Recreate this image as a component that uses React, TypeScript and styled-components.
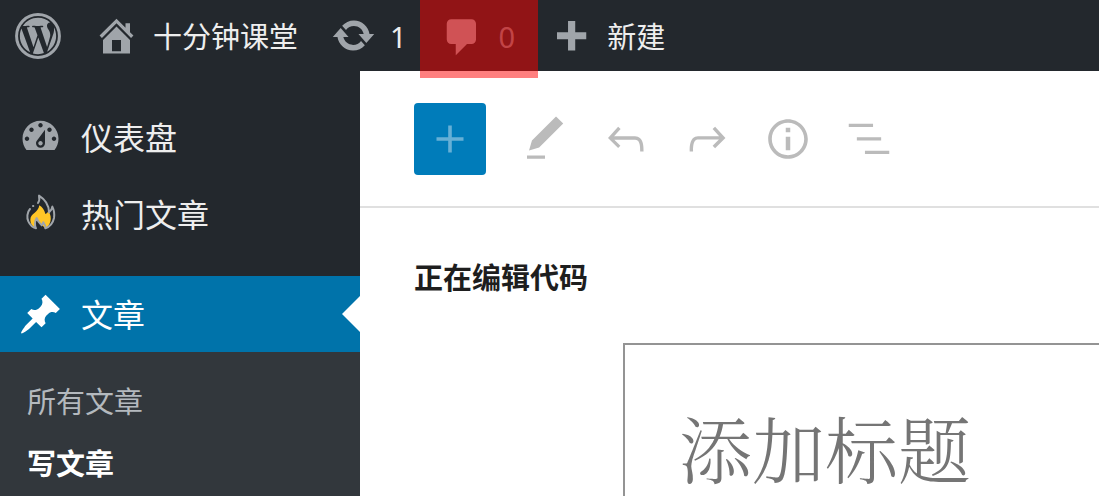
import React from 'react';
import styled, { createGlobalStyle, css } from 'styled-components';

const sans = `"Noto Sans", "Noto Sans CJK SC", sans-serif`;
const serif = `"Noto Serif CJK SC", "Source Han Serif SC", SimSun, "Noto Sans CJK SC", serif`;

const GlobalStyle = createGlobalStyle`
  *, *::before, *::after { box-sizing: border-box; }
  html { overflow: hidden; }
  body { margin: 0; font-family: ${sans}; background: #fff; }
  h1, ul { margin: 0; padding: 0; }
  ul { list-style: none; }
  a { color: inherit; text-decoration: none; }
  button { border: 0; padding: 0; font: inherit; cursor: pointer; }
`;

const Page = styled.div`
  display: flex;
  flex-direction: column;
  height: 100vh;
  overflow: hidden;
`;

const AdminBar = styled.nav`
  display: flex;
  flex: none;
  height: 71px;
  background: #23282d;
  color: #eee;
  font-size: 29px;
`;

const BarItem = styled.a<{ $dim?: boolean }>`
  position: relative;
  display: flex;
  align-items: center;
  gap: 14px;
  padding: 0 16px 0 17px;
  white-space: nowrap;
  ${p => p.$dim && css`color: #84888c;`}
`;

const LogoItem = styled(BarItem)`
  padding: 0 16px 0 15px;
`;

const Label = styled.span`
  line-height: 44px;
  padding-top: 2px;
`;

const Highlight = styled.span`
  position: absolute;
  z-index: 2;
  top: 0;
  bottom: -7px;
  left: -3px;
  right: -7px;
  background: rgba(255, 0, 0, 0.5);
`;

const Dashicon = styled.svg`
  flex: none;
  width: 45px;
  height: 45px;
  fill: #a0a5aa;
`;

const LogoIcon = styled(Dashicon)`
  width: 46px;
  height: 46px;
`;

const Body = styled.div`
  display: flex;
  flex: 1;
  min-height: 0;
`;

const Sidebar = styled.nav`
  flex: none;
  width: 360px;
  padding-top: 27px;
  background: #23282d;
  color: #eee;
`;

const MenuLink = styled.a<{ $current?: boolean }>`
  position: relative;
  display: flex;
  align-items: center;
  gap: 18px;
  height: 77px;
  padding-left: 18px;
  font-size: 32px;
  ${p => p.$current && css`
    height: 76px;
    margin-top: 24px;
    background: #0073aa;
    color: #fff;
    ${Dashicon} { fill: #fff; }
    &::after {
      content: '';
      position: absolute;
      right: 0;
      top: 20px;
      border: 18px solid transparent;
      border-left: 0;
      border-right-color: #fff;
    }
  `}
`;

const SubMenu = styled.ul`
  padding: 19px 0;
  background: #32373c;
  min-height: 100%;
`;

const SubLink = styled.a<{ $current?: boolean }>`
  display: block;
  padding-left: 27px;
  font-size: 29px;
  line-height: 62px;
  color: ${p => (p.$current ? '#fff' : '#b4b9be')};
  font-weight: ${p => (p.$current ? 700 : 400)};
`;

const Editor = styled.main`
  flex: 1;
  min-width: 0;
  overflow: hidden;
  background: #fff;
`;

const Toolbar = styled.div`
  display: flex;
  align-items: center;
  gap: 9px;
  height: 137px;
  padding-left: 54px;
  border-bottom: 2px solid #e0e0e0;
`;

const ToolButton = styled.button`
  display: flex;
  align-items: center;
  justify-content: center;
  flex: none;
  width: 72px;
  height: 72px;
  background: none;
  color: #bbb;
`;

const InsertButton = styled(ToolButton)`
  margin-right: 14px;
  border-radius: 4px;
  background: #007cba;
  color: #66b0d6;
`;

const ToolIcon = styled.svg`
  width: 54px;
  height: 54px;
  fill: currentColor;
`;

const Heading = styled.h1`
  padding: 48px 54px 0;
  font-size: 29px;
  line-height: 44px;
  font-weight: 700;
  color: #1e1e1e;
`;

const TitleInput = styled.input`
  display: block;
  width: 100%;
  height: 206px;
  margin: 43px 0 0 263px;
  padding: 0 54px;
  border: 2px solid #949494;
  border-radius: 0;
  outline: 0;
  background: #fff;
  color: #1e1e1e;
  font-family: ${serif};
  font-size: 73px;
  font-weight: 300;
  &::placeholder { color: #757575; opacity: 1; }
`;

const dash = {
  home: 'M16 8.5l1.53 1.53-1.06 1.06L10 4.6l-6.47 6.49-1.06-1.06L10 2.5l4 4v-2h2v4zm-6-2.46l6 5.99V18H4v-5.97zM12 17v-5H8v5h4z',
  update: 'M10.2 3.28c3.53 0 6.43 2.61 6.92 6h2.08l-3.5 4-3.5-4h2.32c-.45-1.97-2.21-3.45-4.32-3.45-1.45 0-2.73.71-3.54 1.78L4.95 5.66C6.23 4.2 8.11 3.28 10.2 3.28zm-.4 13.44c-3.52 0-6.43-2.61-6.92-6H.8l3.5-4c1.17 1.33 2.33 2.67 3.5 4H5.48c.45 1.97 2.21 3.45 4.32 3.45 1.45 0 2.73-.71 3.54-1.78l1.71 1.95c-1.28 1.46-3.15 2.38-5.25 2.38z',
  comment: 'M5 2.8h9c1.1 0 2 .9 2 2v7c0 1.1-.9 2-2 2h-2l-5 5v-5H5c-1.1 0-2-.9-2-2v-7c0-1.1.9-2 2-2z',
  plus: 'M17 8.5v3.2h-4.9v5H8.9v-5H4V8.5h4.9v-5h3.2v5z',
  dashboard: 'M3.76 16h12.48c1.1-1.37 1.76-3.11 1.76-5 0-4.42-3.58-8-8-8s-8 3.58-8 8c0 1.89.66 3.63 1.76 5zM10 4c.55 0 1 .45 1 1s-.45 1-1 1-1-.45-1-1 .45-1 1-1zM6 6c.55 0 1 .45 1 1s-.45 1-1 1-1-.45-1-1 .45-1 1-1zm8 0c.55 0 1 .45 1 1s-.45 1-1 1-1-.45-1-1 .45-1 1-1zm-5.37 5.55L12 7v6c0 1.1-.9 2-2 2s-2-.9-2-2c0-.57.24-1.08.63-1.45zM4 10c.55 0 1 .45 1 1s-.45 1-1 1-1-.45-1-1 .45-1 1-1zm12 0c.55 0 1 .45 1 1s-.45 1-1 1-1-.45-1-1 .45-1 1-1zm-5 3c0-.55-.45-1-1-1s-1 .45-1 1 .45 1 1 1 1-.45 1-1z',
  pin: 'M10.44 3.02l1.82-1.82 6.36 6.35-1.83 1.82c-1.05-.68-2.48-.57-3.41.36l-.75.75c-.92.93-1.04 2.35-.35 3.41l-1.83 1.82-2.41-2.41-2.8 2.79c-.42.42-3.38 2.71-3.8 2.29s1.86-3.39 2.28-3.81l2.79-2.79L4.1 9.36l1.83-1.82c1.05.69 2.48.57 3.4-.36l.75-.75c.93-.92 1.05-2.35.36-3.41z',
};

const tools = [
  { label: '工具', d: 'M20.1 5.1L16.9 2 6.2 12.7l-1.3 4.4 4.5-1.3L20.1 5.1zM4 20.8h8v-1.5H4v1.5z' },
  { label: '撤销', d: 'M18.3 11.7c-.6-.6-1.4-.9-2.3-.9H6.7l2.9-3.3-1.1-1-4.5 5L8.5 16l1-1-2.7-2.7H16c.5 0 .9.2 1.3.5 1 1 1 3.4 1 4.5v.3h1.5v-.2c0-1.5 0-4.3-1.5-5.7z' },
  { label: '重做', d: 'M15.6 6.5l-1.1 1 2.9 3.3H8c-.9 0-1.7.3-2.3.9-1.4 1.5-1.4 4.2-1.4 5.6v.2h1.5v-.3c0-1.1 0-3.5 1-4.5.3-.3.7-.5 1.3-.5h9.2L14.5 15l1.1 1.1 4.6-4.6-4.6-5z' },
  { label: '详情', d: 'M12 3.2c-4.8 0-8.8 3.9-8.8 8.8 0 4.8 3.9 8.8 8.8 8.8 4.8 0 8.8-3.9 8.8-8.8 0-4.8-4-8.8-8.8-8.8zm0 16c-4 0-7.2-3.3-7.2-7.2C4.8 8 8 4.8 12 4.8s7.2 3.3 7.2 7.2c0 4-3.2 7.2-7.2 7.2zM11 17h2v-6h-2v6zm0-8h2V7h-2v2z' },
  { label: '大纲', d: 'M13.8 5.2H3v1.5h10.8V5.2zm-3.6 12v1.5H21v-1.5H10.2zm7.2-6H6.6v1.5h10.8v-1.5z' },
];

const Icon = ({ d }: { d: string }) => (
  <Dashicon viewBox="0 0 20 20" aria-hidden="true"><path fillRule="evenodd" d={d} /></Dashicon>
);

const WordPressLogo = () => (
  <LogoIcon viewBox="8 8 496 496" aria-hidden="true">
    <circle cx="256" cy="256" r="231" fill="none" stroke="#a0a5aa" strokeWidth="32" />
    <g transform="translate(256 256) scale(.92) translate(-256 -256)">
      <path d="M61.7 169.4l101.5 278C92.2 413 43.3 340.2 43.3 256c0-30.9 6.6-60.1 18.4-86.6zm337.9 75.9c0-26.3-9.4-44.5-17.5-58.7-10.8-17.5-20.9-32.4-20.9-49.9 0-19.6 14.8-37.8 35.7-37.8.9 0 1.8.1 2.8.2-37.9-34.7-88.3-55.9-143.7-55.9-74.3 0-139.7 38.1-177.8 95.9 5 .2 9.7.3 13.7.3 22.2 0 56.7-2.7 56.7-2.7 11.5-.7 12.8 16.2 1.4 17.5 0 0-11.5 1.3-24.3 2l77.5 230.4L249.8 247l-33.1-90.8c-11.5-.7-22.3-2-22.3-2-11.5-.7-10.1-18.2 1.3-17.5 0 0 35.1 2.7 56 2.7 22.2 0 56.7-2.7 56.7-2.7 11.5-.7 12.8 16.2 1.4 17.5 0 0-11.5 1.3-24.3 2l76.9 228.7 21.2-70.9c9-29.4 16-50.5 16-68.7zm-139.9 29.3l-63.8 185.5c19.1 5.6 39.2 8.7 60.1 8.7 24.8 0 48.5-4.3 70.6-12.1-.6-.9-1.1-1.9-1.5-2.9l-65.4-179.2zm183-120.7c.9 6.8 1.4 14 1.4 21.9 0 21.6-4 45.8-16.2 76.2l-65 187.9C426.2 403 468.7 334.5 468.7 256c0-37-9.4-71.8-26-102.1z" />
    </g>
  </LogoIcon>
);

const FlameIcon = () => (
  <Dashicon viewBox="0 0 135 135" aria-hidden="true">
    <path fill="#ffc627" d="M64 43c9 5 15 14 18 26 4-1 7-4 9-9 7 10 9 22 6 32-3 10-8 16-16 20-3-4-6-8-10-11-6-5-11-10-15-17-5 7-6 15-5 26-9-5-14-14-14-24 0-19 24-20 27-43z" />
    <g fill="none" stroke="#a0a5aa" strokeWidth="6" strokeLinecap="round" strokeLinejoin="round">
      <path d="M36 54C27 64 26 80 31 91c5 11 12 18 23 21-5-11-4-21 2-31 3 10 8 16 15 22 3-3 4-5 5-9 5 6 7 11 6 18 13-5 23-16 26-31 2-13 0-24-5-34-1 8-4 13-10 17 0-24-11-38-30-50 2 8 1 16-3 22" />
      <path d="M45 45h1" />
    </g>
  </Dashicon>
);

export default function App() {
  return (
    <Page>
      <GlobalStyle />
      <AdminBar>
        <LogoItem href="#" aria-label="WordPress"><WordPressLogo /></LogoItem>
        <BarItem href="#"><Icon d={dash.home} /><Label>十分钟课堂</Label></BarItem>
        <BarItem href="#"><Icon d={dash.update} /><Label>1</Label></BarItem>
        <BarItem href="#" $dim><Icon d={dash.comment} /><Label>0</Label><Highlight /></BarItem>
        <BarItem href="#"><Icon d={dash.plus} /><Label>新建</Label></BarItem>
      </AdminBar>
      <Body>
        <Sidebar>
          <MenuLink href="#"><Icon d={dash.dashboard} /><Label>仪表盘</Label></MenuLink>
          <MenuLink href="#"><FlameIcon /><Label>热门文章</Label></MenuLink>
          <MenuLink href="#" $current><Icon d={dash.pin} /><Label>文章</Label></MenuLink>
          <SubMenu>
            <li><SubLink href="#">所有文章</SubLink></li>
            <li><SubLink href="#" $current>写文章</SubLink></li>
          </SubMenu>
        </Sidebar>
        <Editor>
          <Toolbar>
            <InsertButton type="button" aria-label="添加区块">
              <ToolIcon viewBox="0 0 24 24"><path d="M18 11.2h-5.2V6h-1.6v5.2H6v1.6h5.2V18h1.6v-5.2H18z" /></ToolIcon>
            </InsertButton>
            {tools.map(t => (
              <ToolButton key={t.label} type="button" aria-label={t.label}>
                <ToolIcon viewBox="0 0 24 24"><path d={t.d} /></ToolIcon>
              </ToolButton>
            ))}
          </Toolbar>
          <Heading>正在编辑代码</Heading>
          <TitleInput aria-label="添加标题" placeholder="添加标题" />
        </Editor>
      </Body>
    </Page>
  );
}
